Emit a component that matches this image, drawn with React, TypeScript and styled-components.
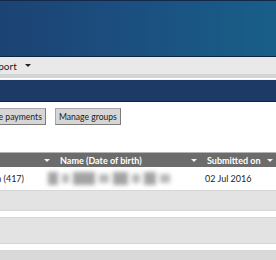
import React from "react";
import styled, { createGlobalStyle } from "styled-components";

const GlobalStyle = createGlobalStyle`
  html, body {
    margin: 0;
    padding: 0;
    background: #ffffff;
    font-family: "Lato", "Open Sans", sans-serif;
  }
`;

const Viewport = styled.div`
  width: 276px;
  height: 260px;
  overflow: hidden;
`;

const Page = styled.div`
  margin-left: -52px;
  width: 340px;
`;

const Banner = styled.header`
  height: 55px;
  border-top: 1px solid #14294a;
  border-bottom: 1px solid #0f2440;
  background: linear-gradient(90deg, #1c3e6d 0%, #1b4e7f 50%, #186089 100%);
`;

const MenuBar = styled.nav`
  height: 17px;
  display: flex;
  align-items: center;
  padding-left: 39px;
  background: #e9e9e9;
  border-bottom: 4px solid #d4d4d4;
  font-size: 10px;
  color: #222;
`;

const MenuItem = styled.span`
  display: flex;
  align-items: center;
  gap: 8px;
`;

const Caret = styled.span<{ $light?: boolean }>`
  width: 0;
  height: 0;
  border-left: 3px solid transparent;
  border-right: 3px solid transparent;
  border-top: 3px solid ${(p) => (p.$light ? "#f2f2f2" : "#222")};
`;

const NavyBar = styled.div`
  height: 21px;
  margin-top: 1px;
  background: #1d3a67;
  border-top: 1px solid #f4f4f4;
  border-bottom: 1px solid #0e2140;
`;

const Actions = styled.div`
  display: flex;
  gap: 9px;
  padding: 6px 0 0 21px;
`;

const Button = styled.button`
  height: 17px;
  padding: 0 3px;
  font-family: "Lato", "Open Sans", sans-serif;
  font-size: 8.6px;
  color: #1a1a1a;
  background: #d6d6d6;
  border: 1px solid #a8a8a8;
  border-right-color: #7c7c7c;
  border-bottom-color: #7c7c7c;
  border-radius: 0;
`;

const Table = styled.div`
  margin-top: 27px;
  border-top: 1px solid #b4b4b4;
`;

const Row = styled.div<{ $shade?: string; $h: number }>`
  display: grid;
  grid-template-columns: 104px 147px 76px 13px;
  height: ${(p) => p.$h}px;
  align-items: center;
  background: ${(p) => p.$shade ?? "#ffffff"};
  border-bottom: 1px solid #d7d7d7;
  font-size: 9px;
  color: #1e1e1e;
`;

const HeadRow = styled(Row)`
  background: #6c6c6c;
  color: #ffffff;
  font-weight: 700;
  border-bottom: none;
`;

const HeadCell = styled.div`
  display: flex;
  align-items: center;
  justify-content: space-between;
  padding: 0 2px 0 8px;
`;

const Cell = styled.div<{ $right?: boolean }>`
  padding-left: 6px;
  padding-right: ${(p) => (p.$right ? "28px" : "0")};
  text-align: ${(p) => (p.$right ? "right" : "left")};
  white-space: nowrap;
`;

const Blurred = styled.div`
  display: flex;
  gap: 4px;
  align-items: center;
  margin-left: -10px;
  filter: blur(2px);
`;

const Blob = styled.span<{ $w: number; $tall?: boolean }>`
  display: block;
  width: ${(p) => p.$w}px;
  height: ${(p) => (p.$tall ? 13 : 9)}px;
  background: ${(p) => (p.$tall ? "#a4a4a4" : "#b8b8b8")};
`;

const blobs = [
  { w: 10, tall: true },
  { w: 7 },
  { w: 22, tall: true },
  { w: 10 },
  { w: 15, tall: true },
  { w: 8 },
  { w: 12, tall: true },
  { w: 10 },
];

export default function App() {
  return (
    <Viewport>
      <GlobalStyle />
      <Page>
        <Banner />
        <MenuBar>
          <MenuItem>
            Report <Caret />
          </MenuItem>
        </MenuBar>
        <NavyBar />
        <Actions>
          <Button>Manage payments</Button>
          <Button>Manage groups</Button>
        </Actions>
        <Table>
          <HeadRow $h={14}>
            <HeadCell>
              <span>Reference</span>
              <Caret $light />
            </HeadCell>
            <HeadCell>
              <span>Name (Date of birth)</span>
              <Caret $light />
            </HeadCell>
            <HeadCell>
              <span>Submitted on</span>
              <Caret $light />
            </HeadCell>
          </HeadRow>
          <Row $h={23}>
            <Cell $right>Aisha Mirza (417)</Cell>
            <Cell>
              <Blurred aria-label="name hidden">
                {blobs.map((b, i) => (
                  <Blob key={i} $w={b.w} $tall={b.tall} />
                ))}
              </Blurred>
            </Cell>
            <Cell>02 Jul 2016</Cell>
          </Row>
          <Row $h={19} $shade="#e3e3e3" />
          <Row $h={6} />
          <Row $h={25} $shade="#e3e3e3" />
          <Row $h={6} />
          <Row $h={10} $shade="#d9d9d9" />
        </Table>
      </Page>
    </Viewport>
  );
}
